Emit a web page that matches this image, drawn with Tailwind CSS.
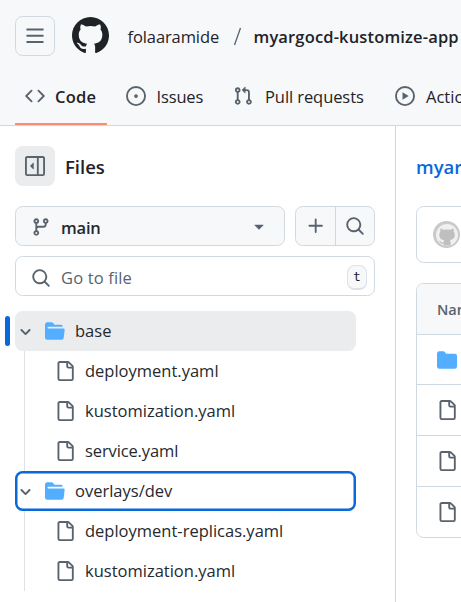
<!DOCTYPE html>
<html lang="en">
<head>
<meta charset="utf-8">
<title>Repository files</title>
<script src="https://cdn.jsdelivr.net/npm/@tailwindcss/browser@4"></script>
</head>
<body class="w-[461px] h-[602px] overflow-hidden bg-white font-['Open_Sans','Noto_Sans',sans-serif] text-[16.5px] leading-[24px] text-[#1f2328] whitespace-nowrap">
<svg class="hidden">
  <symbol id="file" viewBox="0 0 16 16"><path d="M2 1.75C2 .784 2.784 0 3.75 0h6.586c.464 0 .909.184 1.237.513l2.914 2.914c.329.328.513.773.513 1.237v9.586A1.75 1.75 0 0 1 13.25 16h-9.5A1.75 1.75 0 0 1 2 14.25Zm1.75-.25a.25.25 0 0 0-.25.25v12.5c0 .138.112.25.25.25h9.5a.25.25 0 0 0 .25-.25V6h-2.75A1.75 1.75 0 0 1 9 4.25V1.5Zm6.75.062V4.25c0 .138.112.25.25.25h2.688l-.011-.013-2.914-2.914-.013-.011Z"/></symbol>
  <symbol id="open" viewBox="0 0 16 16"><path d="M.513 1.513A1.75 1.75 0 0 1 1.75 1h3.5c.55 0 1.07.26 1.4.7l.9 1.2a.25.25 0 0 0 .2.1H13a1 1 0 0 1 1 1v.5H2.75a.75.75 0 0 0 0 1.5h11.978a1 1 0 0 1 .994 1.117L15 13.25A1.75 1.75 0 0 1 13.25 15H1.75A1.75 1.75 0 0 1 0 13.25V2.75c0-.464.184-.91.513-1.237Z"/></symbol>
  <symbol id="search" viewBox="0 0 16 16"><path d="M10.68 11.74a6 6 0 0 1-7.922-8.982 6 6 0 0 1 8.982 7.922l3.04 3.04a.749.749 0 0 1-.326 1.275.749.749 0 0 1-.734-.215ZM11.5 7a4.499 4.499 0 1 0-8.997 0A4.499 4.499 0 0 0 11.5 7Z"/></symbol>
  <symbol id="chev" viewBox="0 0 12 12"><path d="M6 8.825c-.2 0-.4-.1-.5-.2l-3.3-3.3c-.3-.3-.3-.8 0-1.1.3-.3.8-.3 1.1 0l2.7 2.7 2.7-2.7c.3-.3.8-.3 1.1 0 .3.3.3.8 0 1.1l-3.2 3.2c-.2.2-.4.3-.6.3Z"/></symbol>
  <symbol id="mark" viewBox="0 0 16 16"><path d="M8 0c4.42 0 8 3.58 8 8a8.013 8.013 0 0 1-5.45 7.59c-.4.08-.55-.17-.55-.38 0-.27.01-1.13.01-2.2 0-.75-.25-1.23-.54-1.48 1.78-.2 3.65-.88 3.65-3.95 0-.88-.31-1.59-.82-2.15.08-.2.36-1.02-.08-2.12 0 0-.67-.22-2.2.82-.64-.18-1.32-.27-2-.27-.68 0-1.36.09-2 .27-1.53-1.03-2.2-.82-2.2-.82-.44 1.1-.16 1.92-.08 2.12-.51.56-.82 1.28-.82 2.15 0 3.06 1.86 3.75 3.64 3.95-.23.2-.44.55-.51 1.07-.46.21-1.61.55-2.33-.66-.15-.24-.6-.83-1.23-.82-.67.01-.27.38.01.53.34.19.73.9.82 1.13.16.45.68 1.31 2.69.94 0 .67.01 1.3.01 1.49 0 .21-.15.45-.55.38A7.995 7.995 0 0 1 0 8c0-4.42 3.58-8 8-8Z"/></symbol>
</svg>

<header class="flex h-[126px] flex-col overflow-hidden border-b border-[#d1d9e0] bg-[#f6f8fa]">
  <div class="flex h-[72px] shrink-0 items-end pl-[15px]">
    <button class="mb-4 flex size-10 shrink-0 items-center justify-center rounded-[7.5px] border border-[#d1d9e0]">
      <svg class="size-5 fill-[#59636e]" viewBox="0 0 16 16"><path d="M1 2.75A.75.75 0 0 1 1.75 2h12.5a.75.75 0 0 1 0 1.5H1.75A.75.75 0 0 1 1 2.75Zm0 5A.75.75 0 0 1 1.75 7h12.5a.75.75 0 0 1 0 1.5H1.75A.75.75 0 0 1 1 7.75ZM1.75 12h12.5a.75.75 0 0 1 0 1.5H1.75a.75.75 0 0 1 0-1.5Z"/></svg>
    </button>
    <svg class="mb-[18px] ml-[16.5px] size-[37px] shrink-0 fill-[#1f2328]"><use href="#mark"/></svg>
    <div class="mb-[23px] ml-[19px] flex">
      <span class="w-[105px] shrink-0 tracking-[-0.1px]">folaaramide</span>
      <svg class="mt-[2px] mr-[12px] h-5 w-[9px] shrink-0 stroke-[#59636e]" viewBox="0 0 9 20"><path d="M1.5 18 7.5 1" stroke-width="1.3"/></svg>
      <span class="font-semibold tracking-[0.15px]">myargocd-kustomize-app</span>
    </div>
  </div>
  <nav class="flex h-[53px] shrink-0">
    <div class="ml-[15px] flex w-[91.5px] shrink-0 items-center border-b-[2.5px] border-[#fd8c73] pt-px pl-[10px] pb-[4px]">
      <svg class="mr-[10px] size-5 shrink-0 fill-[#59636e]" viewBox="0 0 16 16"><path d="m11.28 3.22 4.25 4.25a.75.75 0 0 1 0 1.06l-4.25 4.25a.749.749 0 0 1-1.275-.326.749.749 0 0 1 .215-.734L13.94 8l-3.72-3.72a.749.749 0 0 1 .326-1.275.749.749 0 0 1 .734.215Zm-6.56 0a.751.751 0 0 1 1.042.018.751.751 0 0 1 .018 1.042L2.06 8l3.72 3.72a.749.749 0 0 1-.326 1.275.749.749 0 0 1-.734-.215L.47 8.53a.75.75 0 0 1 0-1.06Z"/></svg>
      <span class="pt-[2px] font-semibold tracking-[0.2px]">Code</span>
    </div>
    <div class="flex w-[107px] shrink-0 items-center pt-px pl-[19px] pb-[6px]">
      <svg class="mr-[11px] size-5 shrink-0 fill-[#59636e]" viewBox="0 0 16 16"><path d="M8 9.5a1.5 1.5 0 1 0 0-3 1.5 1.5 0 0 0 0 3Z"/><path d="M8 0a8 8 0 1 1 0 16A8 8 0 0 1 8 0ZM1.500 8a6.500 6.500 0 1 0 13 0 6.500 6.500 0 0 0-13 0Z"/></svg>
      <span class="pt-[2px] tracking-[-0.15px]">Issues</span>
    </div>
    <div class="flex w-[161px] shrink-0 items-center pt-px pl-[19.500px] pb-[6px]">
      <svg class="mr-[12px] size-5 shrink-0 fill-[#59636e]" viewBox="0 0 16 16"><path d="M1.5 3.25a2.25 2.25 0 1 1 3 2.122v5.256a2.251 2.251 0 1 1-1.5 0V5.372A2.25 2.25 0 0 1 1.5 3.25Zm5.677-.177L9.573.677A.25.25 0 0 1 10 .854V2.5h1A2.5 2.5 0 0 1 13.5 5v5.628a2.251 2.251 0 1 1-1.5 0V5a1 1 0 0 0-1-1h-1v1.646a.25.25 0 0 1-.427.177L7.177 3.427a.25.25 0 0 1 0-.354ZM3.750 2.500a.75.75 0 1 0 0 1.500.75.75 0 0 0 0-1.500Zm0 9.500a.75.75 0 1 0 0 1.500.75.75 0 0 0 0-1.500Zm8.250.75a.75.75 0 1 0 1.500 0 .75.75 0 0 0-1.500 0Z"/></svg>
      <span class="pt-[2px] tracking-[-0.08px]">Pull requests</span>
    </div>
    <div class="flex shrink-0 items-center pt-px pl-[20.500px] pb-[6px]">
      <svg class="mr-[11px] size-5 shrink-0 fill-[#59636e]" viewBox="0 0 16 16"><path d="M8 0a8 8 0 1 1 0 16A8 8 0 0 1 8 0ZM1.500 8a6.500 6.500 0 1 0 13 0 6.500 6.500 0 0 0-13 0Zm4.879-2.773 4.264 2.559a.25.25 0 0 1 0 .428l-4.264 2.559A.25.25 0 0 1 6 10.559V5.442a.25.25 0 0 1 .379-.215Z"/></svg>
      <span class="pt-[2px]">Actions</span>
    </div>
  </nav>
</header>

<main class="flex h-[476px] overflow-hidden">
  <aside class="w-[396px] shrink-0 border-r border-[#d1d9e0] pt-5 pl-[15px]">
    <div class="flex items-center">
      <button class="mr-[10px] flex size-10 items-center justify-center rounded-[7.5px] bg-[#ebecee]">
        <svg class="size-5 fill-[#59636e]" viewBox="0 0 16 16"><path d="m4.177 7.823 2.396-2.396A.25.25 0 0 1 7 5.604v4.792a.25.25 0 0 1-.427.177L4.177 8.177a.25.25 0 0 1 0-.354Z"/><path d="M0 1.750C0 .784.784 0 1.750 0h12.500C15.216 0 16 .784 16 1.750v12.500A1.750 1.750 0 0 1 14.250 16H1.750A1.750 1.750 0 0 1 0 14.250Zm1.750-.250a.25.25 0 0 0-.250.250v12.500c0 .138.112.250.250.250H9.500v-13Zm12.500 13a.25.25 0 0 0 .250-.250V1.750a.25.25 0 0 0-.250-.250H11v13Z"/></svg>
      </button>
      <h2 class="pt-[2px] text-[18.5px] font-semibold">Files</h2>
    </div>
    <div class="mt-5 flex gap-[10px]">
      <button class="flex h-10 w-[270px] items-center rounded-[7.5px] border border-[#d1d9e0] bg-[#f6f8fa] pl-[15px]">
        <svg class="mt-[2px] mr-[10px] size-5 fill-[#59636e]" viewBox="0 0 16 16"><path d="M9.500 3.250a2.250 2.250 0 1 1 3 2.122V6A2.500 2.500 0 0 1 10 8.500H6a1 1 0 0 0-1 1v1.128a2.251 2.251 0 1 1-1.500 0V5.372a2.250 2.250 0 1 1 1.500 0v1.836A2.493 2.493 0 0 1 6 7h4a1 1 0 0 0 1-1v-.628A2.250 2.250 0 0 1 9.500 3.250Zm-6 0a.75.75 0 1 0 1.500 0 .75.75 0 0 0-1.500 0Zm8.250-.750a.75.75 0 1 0 0 1.500.75.75 0 0 0 0-1.500ZM4.250 12a.75.75 0 1 0 0 1.500.75.75 0 0 0 0-1.500Z"/></svg>
        <span class="pt-[3px] font-semibold tracking-[-0.2px] text-[#25292e]">main</span>
        <svg class="mr-[15px] ml-auto size-5 fill-[#59636e]" viewBox="0 0 16 16"><path d="m4.427 7.427 3.396 3.396a.25.25 0 0 0 .354 0l3.396-3.396A.25.25 0 0 0 11.396 7H4.604a.25.25 0 0 0-.177.427Z"/></svg>
      </button>
      <div class="flex h-10 w-20 rounded-[7.5px] border border-[#d1d9e0] bg-[#f6f8fa]">
        <button class="flex w-10 items-center justify-center border-r border-[#d1d9e0]"><svg class="size-5 fill-[#59636e]" viewBox="0 0 16 16"><path d="M7.750 2a.75.75 0 0 1 .75.75V7h4.250a.75.75 0 0 1 0 1.500H8.500v4.250a.75.75 0 0 1-1.500 0V8.500H2.750a.75.75 0 0 1 0-1.500H7V2.750A.75.75 0 0 1 7.750 2Z"/></svg></button>
        <button class="flex w-[38px] items-center justify-center"><svg class="size-5 fill-[#59636e]"><use href="#search"/></svg></button>
      </div>
    </div>
    <div class="mt-[10px] flex h-10 w-[360px] items-center rounded-[7.5px] border border-[#d1d9e0] pl-[15px]">
      <svg class="mt-[3px] mr-[10px] size-5 fill-[#59636e]"><use href="#search"/></svg>
      <span class="pt-[3px] tracking-[0.15px] text-[#59636e]">Go to file</span>
      <kbd class="mt-[3px] mr-[7px] ml-auto flex h-[25px] w-5 items-center justify-center rounded-[7.5px] border border-b-2 border-[#dde2e8] bg-[#f6f8fa] font-['DejaVu_Sans_Mono',monospace] text-[13px]">t</kbd>
    </div>

    <div class="relative mt-[15px] w-[341px] text-[#25292e]">
      <div class="absolute top-[5px] -left-[10px] h-[30px] w-[5px] rounded-[4px] bg-[#0969da]"></div>
      <div class="absolute top-10 left-[9px] h-60 w-px bg-[#dde2e6]"></div>
      <div class="flex h-10 items-center rounded-[7.5px] bg-[#ebecee] pl-[3px]"><svg class="mr-[12px] size-[15px] fill-[#59636e]"><use href="#chev"/></svg><svg class="mr-[10px] size-5 fill-[#54aeff]"><use href="#open"/></svg>base</div>
      <div class="flex h-10 items-center pl-10"><svg class="mr-[10px] size-5 fill-[#59636e]"><use href="#file"/></svg>deployment.yaml</div>
      <div class="flex h-10 items-center pl-10"><svg class="mr-[10px] size-5 fill-[#59636e]"><use href="#file"/></svg>kustomization.yaml</div>
      <div class="flex h-10 items-center pl-10 tracking-[-0.12px]"><svg class="mr-[10px] size-5 fill-[#59636e]"><use href="#file"/></svg>service.yaml</div>
      <div class="relative flex h-10 items-center rounded-[7.5px] bg-white pl-[3px] inset-ring-[2.5px] inset-ring-[#0969da]"><svg class="mr-[12px] size-[15px] fill-[#59636e]"><use href="#chev"/></svg><svg class="mr-[10px] size-5 fill-[#54aeff]"><use href="#open"/></svg>overlays/dev</div>
      <div class="flex h-10 items-center pl-10"><svg class="mr-[10px] size-5 fill-[#59636e]"><use href="#file"/></svg>deployment-replicas.yaml</div>
      <div class="flex h-10 items-center pl-10"><svg class="mr-[10px] size-5 fill-[#59636e]"><use href="#file"/></svg>kustomization.yaml</div>
    </div>
  </aside>

  <section class="w-[500px] shrink-0 pt-5 pl-5">
    <div class="flex h-10 items-center pt-[2px] text-[18.5px] font-semibold text-[#0969da]">myargocd-kustomize-app</div>
    <div class="mt-5 flex h-[57px] items-center rounded-[7.5px] border border-[#d1d9e0] pl-4">
      <div class="flex size-[27px] items-center justify-center rounded-full bg-[#c9c9c9]"><div class="flex size-[22px] items-center justify-center rounded-full bg-[#f0f0f0]"><svg class="size-[22px]" viewBox="0 0 22 22"><path fill="#bfbfbf" d="M4.500 4.500q.4-.4 3 1.300 3.500-.7 7 0 2.600-1.700 3-1.300.6 1.600.1 3 1.200 1.400 1.200 3.200c0 3.500-2 4.900-5 5.300.7.600.8 1.500.8 2.600v3h-7v-2c-2 .4-3.100-.4-3.700-1.700l-1-1.200q1-.3 1.700.7 1 1.500 3 .900 0-1.400.7-2.200c-3-.4-5-1.800-5-5.400q0-1.800 1.100-3.200-.4-1.500.1-3Z"/></svg></div></div>
    </div>
    <div class="mt-5 h-[255px] divide-y divide-[#d1d9e0] overflow-hidden rounded-[7.5px] border border-[#d1d9e0]">
      <div class="flex h-[51px] items-center bg-[#f6f8fa] pt-px pl-5 text-[14.5px] font-semibold text-[#59636e]">Name</div>
      <div class="flex h-[50px] items-center pl-5"><svg class="size-5 fill-[#54aeff]" viewBox="0 0 16 16"><path d="M1.750 1A1.750 1.750 0 0 0 0 2.750v10.500C0 14.216.784 15 1.750 15h12.500A1.750 1.750 0 0 0 16 13.250v-8.500A1.750 1.750 0 0 0 14.250 3H7.500a.25.25 0 0 1-.2-.1l-.9-1.200C6.070 1.260 5.550 1 5 1H1.750Z"/></svg></div>
      <div class="flex h-[51px] items-center pl-5"><svg class="size-5 fill-[#59636e]"><use href="#file"/></svg></div>
      <div class="flex h-[51px] items-center pl-5"><svg class="size-5 fill-[#59636e]"><use href="#file"/></svg></div>
      <div class="flex h-[50px] items-center pl-5"><svg class="size-5 fill-[#59636e]"><use href="#file"/></svg></div>
    </div>
  </section>
</main>
</body>
</html>
